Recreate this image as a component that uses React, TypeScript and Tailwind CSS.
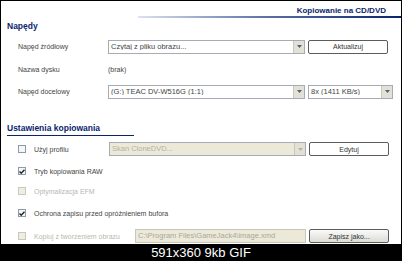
import React from 'react'

const font = { fontFamily: '"Liberation Sans", Arial, sans-serif' }

const Arrow = ({ disabled }: { disabled?: boolean }) => (
  <div className="flex h-full w-[11px] items-center justify-center border-l border-[#c9c7ba] bg-[#e3e1d5]">
    <svg width="5" height="3" viewBox="0 0 5 3">
      <path d="M0 0h5L2.5 3z" fill={disabled ? '#b5b3a8' : '#4d6185'} />
    </svg>
  </div>
)

const Combo = ({ text, className, disabled }: { text: string; className: string; disabled?: boolean }) => (
  <div
    className={`flex h-[14px] items-center border border-[#a5acb5] ${disabled ? 'bg-[#ece9d8] text-[#b4b2a6]' : 'bg-white text-[#444]'} ${className}`}
  >
    <span className="flex-1 truncate pl-[2px] text-[7.5px] leading-none">{text}</span>
    <Arrow disabled={disabled} />
  </div>
)

const Button = ({ text, grey }: { text: string; grey?: boolean }) => (
  <div
    className={`flex h-[14px] w-[80px] items-center justify-center rounded-[2px] border border-[#5c5c5c] text-[7px] leading-none text-[#333] ${grey ? 'bg-gradient-to-b from-[#fafafa] to-[#dcdcd4]' : 'bg-white'}`}
  >
    {text}
  </div>
)

const Check = ({ checked, disabled, label }: { checked?: boolean; disabled?: boolean; label: string }) => (
  <div className="flex h-[8px] items-center">
    <div
      className={`flex h-[8px] w-[8px] items-center justify-center border ${disabled ? 'border-[#cac8bb] bg-[#efeee5]' : 'border-[#8a9bb0] bg-[#f6f6f2]'}`}
    >
      {checked && (
        <svg width="6" height="5" viewBox="0 0 6 5">
          <path d="M0.5 2.5L2.2 4.2L5.5 0.8" stroke="#222" strokeWidth="1.4" fill="none" />
        </svg>
      )}
    </div>
    <span className={`ml-[8px] text-[7px] leading-none ${disabled ? 'text-[#b8b8b0]' : 'text-[#444]'}`}>{label}</span>
  </div>
)

export default function App() {
  return (
    <div className="flex h-[261px] w-[402px] flex-col bg-black px-[1px] pt-[1px]" style={font}>
      <div className="flex h-[243px] flex-col bg-white">
        {/* header */}
        <div className="flex h-[14px] items-end justify-end pr-[15px]">
          <span className="text-[8px] font-bold leading-none text-[#0a2470]">Kopiowanie na CD/DVD</span>
        </div>
        <div className="ml-[137px] mt-[1px] h-[2px] bg-gradient-to-r from-[#dde2ef] via-[#5a6ea4] to-[#0a246a]" />

        <div className="mt-[4px] pl-[6px] text-[8.5px] font-bold leading-none text-[#0a2470]">Napędy</div>

        {/* drives */}
        <div className="mt-[9px] flex items-center pl-[17px]">
          <span className="w-[90px] text-[7px] leading-none text-[#444]">Napęd źródłowy</span>
          <Combo text="Czytaj z pliku obrazu..." className="w-[197px]" />
          <div className="ml-[3px]">
            <Button text="Aktualizuj" />
          </div>
        </div>
        <div className="mt-[12px] flex items-center pl-[17px]">
          <span className="w-[90px] text-[7px] leading-none text-[#444]">Nazwa dysku</span>
          <span className="text-[7px] leading-none text-[#444]">(brak)</span>
        </div>
        <div className="mt-[12px] flex items-center pl-[17px]">
          <span className="w-[90px] text-[7px] leading-none text-[#444]">Napęd docelowy</span>
          <Combo text="(G:) TEAC DV-W516G (1:1)" className="w-[197px]" />
          <Combo text="8x (1411 KB/s)" className="ml-[3px] w-[85px]" />
        </div>

        {/* copy settings */}
        <div className="mt-[25px] pl-[6px] text-[8.5px] font-bold leading-none text-[#0a2470]">Ustawienia kopiowania</div>
        <div className="ml-[6px] mt-[3px] h-[1px] w-[127px] bg-[#0a246a]" />

        <div className="mt-[6px] flex items-center pl-[17px]">
          <div className="w-[91px]">
            <Check label="Użyj profilu" />
          </div>
          <Combo text="Skan CloneDVD..." className="w-[197px]" disabled />
          <div className="ml-[3px]">
            <Button text="Edytuj" />
          </div>
        </div>
        <div className="mt-[11px] pl-[17px]">
          <Check checked label="Tryb kopiowania RAW" />
        </div>
        <div className="mt-[12px] pl-[17px]">
          <Check disabled label="Optymalizacja EFM" />
        </div>
        <div className="mt-[14px] pl-[17px]">
          <Check checked label="Ochrona zapisu przed opróżnieniem bufora" />
        </div>
        <div className="mt-[12px] flex items-center pl-[17px]">
          <div className="w-[117px]">
            <Check disabled label="Kopiuj z tworzeniem obrazu" />
          </div>
          <div className="flex h-[14px] w-[171px] items-center border border-[#c9c7ba] bg-[#ece9d8] pl-[2px] text-[7.5px] leading-none text-[#aaa89c]">
            C:\Program Files\GameJack4\image.xmd
          </div>
          <div className="ml-[3px]">
            <Button text="Zapisz jako..." grey />
          </div>
        </div>
      </div>
      <div className="flex flex-1 items-center justify-center text-[13px] leading-none text-white">591x360 9kb GIF</div>
    </div>
  )
}
